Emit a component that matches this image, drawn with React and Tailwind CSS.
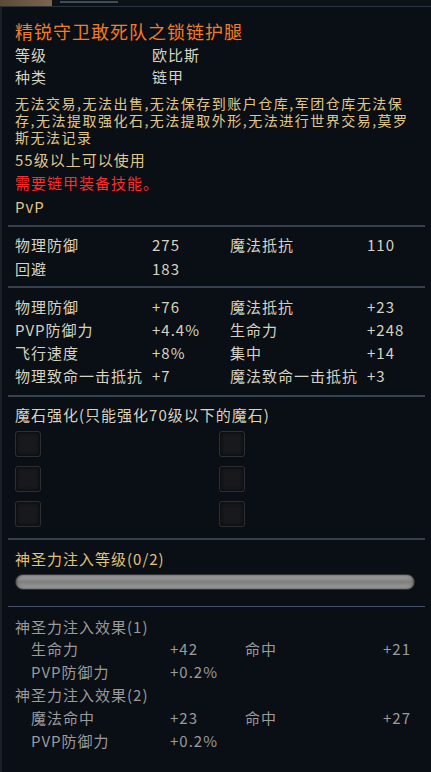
const font = { fontFamily: '"Noto Sans CJK SC", "Noto Sans", sans-serif' }

function Sep() {
  return <div className="mx-[6px] h-[2px] bg-[#36404e]" />
}

function StatRow({ a, av, b, bv }) {
  return (
    <div className="flex h-[23px] items-center whitespace-nowrap">
      <span className="w-[137px]">{a}</span>
      <span className="w-[78px]">{av}</span>
      <span className="w-[137px]">{b}</span>
      <span>{bv}</span>
    </div>
  )
}

function Slot() {
  return (
    <div className="w-[26px] h-[26px] rounded-[3px] border border-[#2c3035] bg-[#17191c] shadow-[inset_0_0_4px_rgba(0,0,0,0.9)]" />
  )
}

function EffectRow({ a, av, b, bv }) {
  return (
    <div className="flex h-[23px] items-center whitespace-nowrap pl-[16px]">
      <span className="w-[139px]">{a}</span>
      <span className="w-[75px]">{av}</span>
      <span className="w-[138px]">{b}</span>
      <span>{bv}</span>
    </div>
  )
}

export default function App() {
  return (
    <div className="w-[431px] h-[772px] bg-[#0a0e15] overflow-hidden flex flex-col text-[15px] tracking-[1px]" style={font}>
      {/* strip of the scene behind the tooltip */}
      <div className="h-[6px] flex bg-[#0d1218] shrink-0">
        <div className="w-[52px] bg-gradient-to-r from-[#5b4a3a] to-[#7a6650]" />
        <div className="w-[8px]" />
        <div className="w-[58px] mt-[1px] h-[2px] bg-[#444c56]" />
      </div>

      <div className="flex-1 border-t border-[#2a3440] border-l-2 border-l-[#1b2028] bg-[#0a0e15]">
        {/* header */}
        <div className="px-[13px] pt-[12px] pb-[6px]">
          <div className="h-[25px] flex items-center text-[18px] text-[#f27b2c]">精锐守卫敢死队之锁链护腿</div>
          <div className="text-[#d7d3c1]">
            <div className="flex h-[22px] items-center"><span className="w-[137px]">等级</span><span>欧比斯</span></div>
            <div className="flex h-[22px] items-center"><span className="w-[137px]">种类</span><span>链甲</span></div>
          </div>
          <div className="mt-[7px] text-[14px] text-[#e0c68c] leading-[17px] whitespace-nowrap tracking-[1.5px]">
            <div>无法交易,无法出售,无法保存到账户仓库,军团仓库无法保</div>
            <div>存,无法提取强化石,无法提取外形,无法进行世界交易,莫罗</div>
            <div>斯无法记录</div>
          </div>
          <div className="mt-[3px] h-[22px] flex items-center text-[#e0c68c]">55级以上可以使用</div>
          <div className="h-[24px] flex items-center text-[#ff2a2a]">需要链甲装备技能。</div>
          <div className="h-[24px] flex items-center text-[#e0c68c]">PvP</div>
        </div>
        <Sep />

        {/* base stats */}
        <div className="px-[13px] pt-[6px] pb-[5px] text-[#d7d3c1]">
          <div className="flex h-[24px] items-center"><span className="w-[137px]">物理防御</span><span className="w-[78px]">275</span><span className="w-[137px]">魔法抵抗</span><span>110</span></div>
          <div className="flex h-[24px] items-center"><span className="w-[137px]">回避</span><span>183</span></div>
        </div>
        <Sep />

        {/* bonus stats */}
        <div className="px-[13px] pt-[8px] pb-[7px] text-[#d7d3c1]">
          <StatRow a="物理防御" av="+76" b="魔法抵抗" bv="+23" />
          <StatRow a="PVP防御力" av="+4.4%" b="生命力" bv="+248" />
          <StatRow a="飞行速度" av="+8%" b="集中" bv="+14" />
          <StatRow a="物理致命一击抵抗" av="+7" b="魔法致命一击抵抗" bv="+3" />
        </div>
        <Sep />

        {/* manastones */}
        <div className="px-[13px] pt-[7px] pb-[11px]">
          <div className="h-[22px] flex items-center text-[#d7d3c1]">魔石强化(只能强化70级以下的魔石)</div>
          <div className="mt-[5px] grid grid-cols-[204px_1fr] gap-y-[9px]">
            <Slot /><Slot />
            <Slot /><Slot />
            <Slot /><Slot />
          </div>
        </div>
        <Sep />

        {/* divine power */}
        <div className="px-[13px] pt-[8px] pb-[16px]">
          <div className="h-[22px] flex items-center text-[#e0c27a]">神圣力注入等级(0/2)</div>
          <div className="mt-[4px] h-[16px] w-[400px] rounded-full border border-[#333] bg-gradient-to-b from-[#a6a6a6] via-[#7e7e7e] to-[#a2a2a2] shadow-[inset_0_0_3px_rgba(0,0,0,0.6)]" />
        </div>
        <div className="mx-[6px] h-[1px] bg-[#46506a]" />

        {/* effects */}
        <div className="px-[13px] pt-[9px] text-[#9b9b9b]">
          <div className="h-[22px] flex items-center">神圣力注入效果(1)</div>
          <EffectRow a="生命力" av="+42" b="命中" bv="+21" />
          <EffectRow a="PVP防御力" av="+0.2%" />
          <div className="h-[23px] flex items-center">神圣力注入效果(2)</div>
          <EffectRow a="魔法命中" av="+23" b="命中" bv="+27" />
          <EffectRow a="PVP防御力" av="+0.2%" />
        </div>
      </div>
    </div>
  )
}
